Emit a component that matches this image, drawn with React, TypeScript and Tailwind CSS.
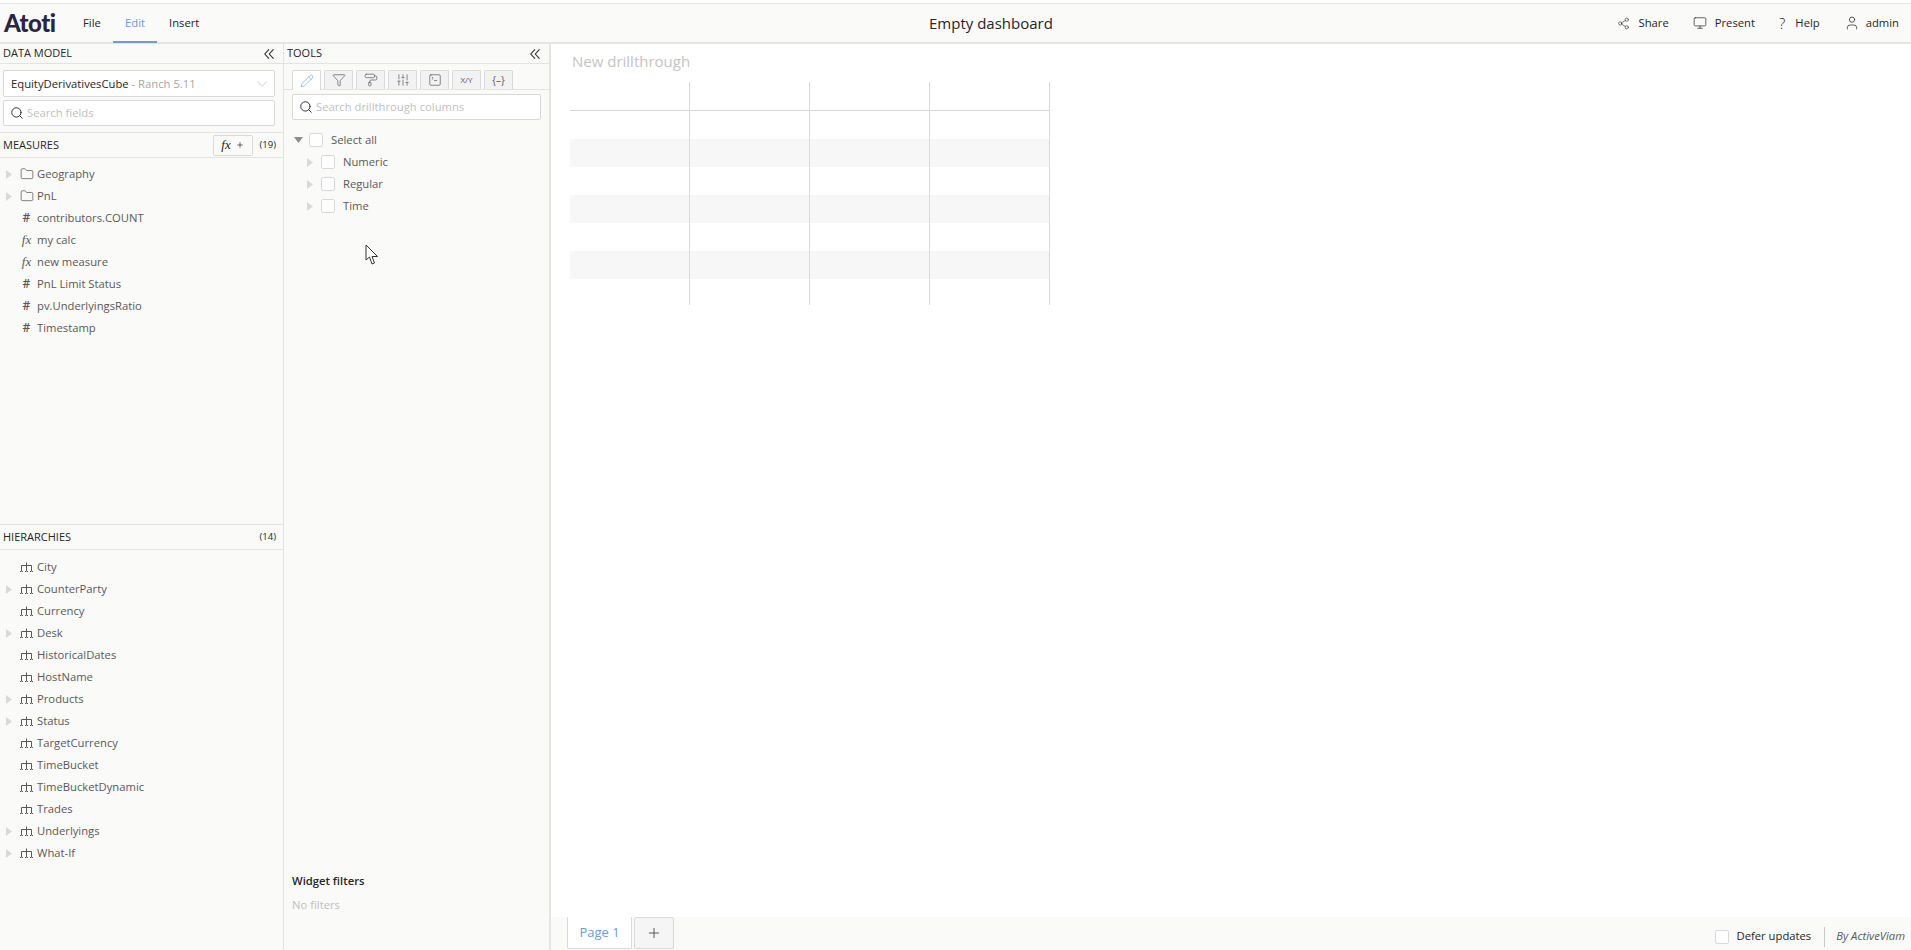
import { ChevronDown, Folder, Monitor, PaintRoller, Pencil, Plus, Search, Share2, SlidersVertical, SquareTerminal, Funnel, User } from 'lucide-react';

const measures = [
  { icon: 'folder', label: 'Geography', caret: true },
  { icon: 'folder', label: 'PnL', caret: true },
  { icon: 'hash', label: 'contributors.COUNT' },
  { icon: 'fx', label: 'my calc' },
  { icon: 'fx', label: 'new measure' },
  { icon: 'hash', label: 'PnL Limit Status' },
  { icon: 'hash', label: 'pv.UnderlyingsRatio' },
  { icon: 'hash', label: 'Timestamp' },
];

const hierarchies = [
  { label: 'City' },
  { label: 'CounterParty', caret: true },
  { label: 'Currency' },
  { label: 'Desk', caret: true },
  { label: 'HistoricalDates' },
  { label: 'HostName' },
  { label: 'Products', caret: true },
  { label: 'Status', caret: true },
  { label: 'TargetCurrency' },
  { label: 'TimeBucket' },
  { label: 'TimeBucketDynamic' },
  { label: 'Trades' },
  { label: 'Underlyings', caret: true },
  { label: 'What-If', caret: true },
];

const HierarchyIcon = () => (
  <svg width="13" height="11" viewBox="0 0 13 11" fill="none" stroke="#595959" strokeWidth="1">
    <path d="M6.500 0.500V9.500M1.500 9.500V3.500H11.500V9.500" />
    <path d="M0 9.500h3M5 9.500h3M10 9.500h3" strokeDasharray="1 1" />
  </svg>
);

const CollapseIcon = () => (
  <svg width="10" height="10" viewBox="0 0 10 10" fill="none" stroke="#333" strokeWidth="1.1">
    <path d="M5 0.300L0.800 5L5 9.700M9.500 0.300L5.300 5L9.500 9.700" />
  </svg>
);

const Caret = ({ open }: { open?: boolean }) =>
  open ? (
    <svg width="9" height="6" viewBox="0 0 9 6"><path d="M0 0H9L4.500 6Z" fill="#8c8c8c" /></svg>
  ) : (
    <svg width="6" height="9" viewBox="0 0 6 9"><path d="M0 0V9L6 4.500Z" fill="#d9d9d9" /></svg>
  );

const Check = () => <span className="block w-[14px] h-[14px] rounded-[2px] border border-[#d9d9d9] bg-white" />;

const TreeRow = ({ caret, icon, label }: { caret?: boolean; icon: React.ReactNode; label: string }) => (
  <div className="flex items-center h-[22px]">
    <span className="w-[19px] pl-[6px] flex items-center">{caret && <Caret />}</span>
    <span className="w-[15px] flex justify-center items-center">{icon}</span>
    <span className="ml-[3px] text-[#595959]">{label}</span>
  </div>
);

const PanelHeader = ({ title }: { title: string }) => (
  <div className="h-[20px] flex items-center justify-between border-b border-[#e3e3e3] pl-[3px] pr-[9px] text-[11px] text-[#262626]">
    <span>{title}</span>
    <CollapseIcon />
  </div>
);

const SearchBox = ({ placeholder }: { placeholder: string }) => (
  <div className="h-[26px] bg-white border border-[#d9d9d9] rounded-[2px] flex items-center pl-[6px] gap-[3px]">
    <Search size={14} strokeWidth={1.6} className="text-[#262626]" />
    <span className="text-[#bfbfbf] pt-[1px]">{placeholder}</span>
  </div>
);

const tabIcons = [
  <Pencil size={14} strokeWidth={1.1} className="text-[#6b9bdc]" />,
  <Funnel size={14} strokeWidth={1.2} />,
  <PaintRoller size={14} strokeWidth={1.2} />,
  <SlidersVertical size={14} strokeWidth={1.2} />,
  <SquareTerminal size={14} strokeWidth={1.2} />,
  <span className="text-[8px]">X/Y</span>,
  <span className="text-[10px]">{'{–}'}</span>,
];

export default function App() {
  return (
    <div className="h-[950px] w-[1911px] overflow-hidden relative bg-white text-[11.25px] text-[#262626] flex flex-col" style={{ fontFamily: '"Open Sans", "Noto Sans", sans-serif' }}>
      <div className="h-[3px] shrink-0 bg-white border-b border-[#e8e8e8] box-content" />
      {/* Top bar */}
      <header className="h-[40px] shrink-0 bg-[#fafaf8] border-b-2 border-[#e5e5e3] flex items-center">
        <div className="w-[929px] shrink-0 flex items-center h-full">
          <span className="ml-[4px] w-[54px] text-[24px] font-black text-[#2a2542] tracking-[-0.5px]" style={{ fontFamily: 'Lato, sans-serif' }}>Atoti</span>
          <span className="ml-[25px] w-[30px]">File</span>
          <span className="h-full w-[44px] flex items-center justify-center text-[#6b9bdc] border-b-[2px] border-[#6b9bdc] relative top-[1px]">Edit</span>
          <span className="ml-[12px]">Insert</span>
        </div>
        <div className="text-[15px] text-[#262626]">Empty dashboard</div>
        <div className="ml-auto flex items-center pr-[12px] gap-[24px]">
          <span className="flex items-center gap-[9px]"><Share2 size={13} strokeWidth={1.1} />Share</span>
          <span className="flex items-center gap-[8px]"><Monitor size={14} strokeWidth={1.2} />Present</span>
          <span className="flex items-center gap-[10px]"><span className="text-[15px] font-light">?</span>Help</span>
          <span className="flex items-center gap-[6px]"><User size={16} strokeWidth={1.1} />admin</span>
        </div>
      </header>

      <div className="flex-1 flex min-h-0">
        {/* Data model panel */}
        <aside className="w-[284px] shrink-0 bg-[#fafaf8] border-r border-[#e3e3e3] flex flex-col">
          <PanelHeader title="DATA MODEL" />
          <div className="pl-[3px] pt-[6px] pb-[6px] border-b border-[#e3e3e3] flex flex-col gap-[3px] pr-[8px]">
            <div className="h-[27px] bg-white border border-[#d9d9d9] rounded-[2px] flex items-center justify-between pl-[7px] pr-[3px]">
              <span className="pt-[1px]">EquityDerivativesCube <span className="text-[#a6a6a6]">- Ranch 5.11</span></span>
              <ChevronDown size={18} strokeWidth={1} className="text-[#bfbfbf]" />
            </div>
            <SearchBox placeholder="Search fields" />
          </div>
          <div className="h-[25px] flex items-center justify-between border-b border-[#e3e3e3] pl-[3px] pr-[7px] text-[11px]">
            <span>MEASURES</span>
            <span className="flex items-center gap-[7px]">
              <span className="w-[40px] h-[21px] border border-[#d9d9d9] rounded-[2px] flex items-center justify-center gap-[5px] bg-[#fafaf8]">
                <i style={{ fontFamily: '"Liberation Serif", serif' }} className="text-[13px]">fx</i>
                <Plus size={8} />
              </span>
              <span className="text-[9.5px]">(19)</span>
            </span>
          </div>
          <div className="h-[366px] pt-[5px]">
            {measures.map((m) => (
              <TreeRow
                key={m.label}
                caret={m.caret}
                label={m.label}
                icon={
                  m.icon === 'folder' ? (
                    <Folder size={14} strokeWidth={1.3} className="text-[#595959]" />
                  ) : m.icon === 'fx' ? (
                    <i style={{ fontFamily: '"Liberation Serif", serif' }} className="text-[13px] text-[#595959]">fx</i>
                  ) : (
                    <span className="text-[12px] font-semibold text-[#595959]">#</span>
                  )
                }
              />
            ))}
          </div>
          <div className="h-[24px] flex items-center justify-between border-y border-[#e3e3e3] box-content pl-[3px] pr-[7px] text-[11px]">
            <span>HIERARCHIES</span>
            <span className="text-[9.5px]">(14)</span>
          </div>
          <div className="pt-[6px]">
            {hierarchies.map((h) => (
              <TreeRow key={h.label} caret={h.caret} label={h.label} icon={<HierarchyIcon />} />
            ))}
          </div>
        </aside>

        {/* Tools panel */}
        <aside className="w-[267px] shrink-0 bg-[#fafaf8] border-r-2 border-[#e5e5e3] flex flex-col">
          <PanelHeader title="TOOLS" />
          <div className="h-[26px] pt-[6px] pl-[8px] flex gap-[3px] border-b border-[#e3e3e3]">
            {tabIcons.map((ic, i) => (
              <span
                key={i}
                className={
                  i === 0
                    ? 'w-[29px] h-[20px] bg-white border border-b-0 border-[#d9d9d9] rounded-t-[2px] flex items-center justify-center'
                    : 'w-[29px] h-[19px] bg-[#f2f2f2] border border-b-0 border-[#d9d9d9] rounded-t-[2px] flex items-center justify-center text-[#595959]'
                }
              >
                {ic}
              </span>
            ))}
          </div>
          <div className="mx-[8px] mt-[4px]">
            <SearchBox placeholder="Search drillthrough columns" />
          </div>
          <div className="flex-1 pt-[9px] pl-[10px]">
            <div className="flex items-center h-[22px]">
              <Caret open />
              <span className="ml-[6px]"><Check /></span>
              <span className="ml-[8px] text-[#595959]">Select all</span>
            </div>
            {['Numeric', 'Regular', 'Time'].map((l) => (
              <div key={l} className="flex items-center h-[22px] pl-[13px]">
                <Caret />
                <span className="ml-[8px]"><Check /></span>
                <span className="ml-[8px] text-[#595959]">{l}</span>
              </div>
            ))}
          </div>
          <div className="pl-[8px] pb-[36px]">
            <div className="font-semibold h-[24px]">Widget filters</div>
            <div className="text-[#bfbfbf]">No filters</div>
          </div>
        </aside>

        {/* Dashboard */}
        <main className="flex-1 flex flex-col min-w-0">
          <div className="flex-1 pl-[19px] pt-[6px]">
            <div className="text-[15px] text-[#c4c4c4] h-[32px] pl-[2px]">New drillthrough</div>
            <div className="w-[480px] h-[223px] relative">
              <div className="h-[29px] border-b border-[#d9d9d9]" />
              {[0, 1, 2, 3, 4, 5].map((r) => (
                <div key={r} className={r % 2 === 1 ? 'h-[28px] bg-[#f7f7f7]' : 'h-[28px]'} />
              ))}
              <div className="absolute inset-0 grid grid-cols-4">
                {[0, 1, 2, 3].map((c) => (
                  <div key={c} className="border-r border-[#d9d9d9]" />
                ))}
              </div>
            </div>
          </div>
          <div className="h-[33px] shrink-0 bg-[#fafaf8] flex items-start justify-between pl-[16px] pr-[6px]">
            <div className="flex gap-[2px]">
              <div className="w-[65px] h-[32px] bg-white border border-t-0 border-[#d9d9d9] rounded-b-[2px] flex items-center justify-center text-[13px] text-[#6b9bdc]">Page 1</div>
              <div className="w-[40px] h-[32px] bg-[#f5f5f5] border border-[#d9d9d9] rounded-[2px] flex items-center justify-center"><Plus size={16} strokeWidth={1.5} className="text-[#595959]" /></div>
            </div>
            <div className="flex items-center h-full pt-[6px]">
              <Check />
              <span className="ml-[8px]">Defer updates</span>
              <span className="ml-[13px] mr-[11px] w-px h-[20px] bg-[#c8c8c8]" />
              <i className="text-[#595959]">By ActiveViam</i>
            </div>
          </div>
        </main>
      </div>

      {/* mouse pointer */}
      <svg className="absolute left-[365px] top-[244px]" width="14" height="22" viewBox="0 0 14 22">
        <path d="M1 1V16L4.500 13L7 20L9.500 19L7 12.500H12.500Z" fill="#fff" stroke="#333" strokeWidth="1" />
      </svg>
    </div>
  );
}
